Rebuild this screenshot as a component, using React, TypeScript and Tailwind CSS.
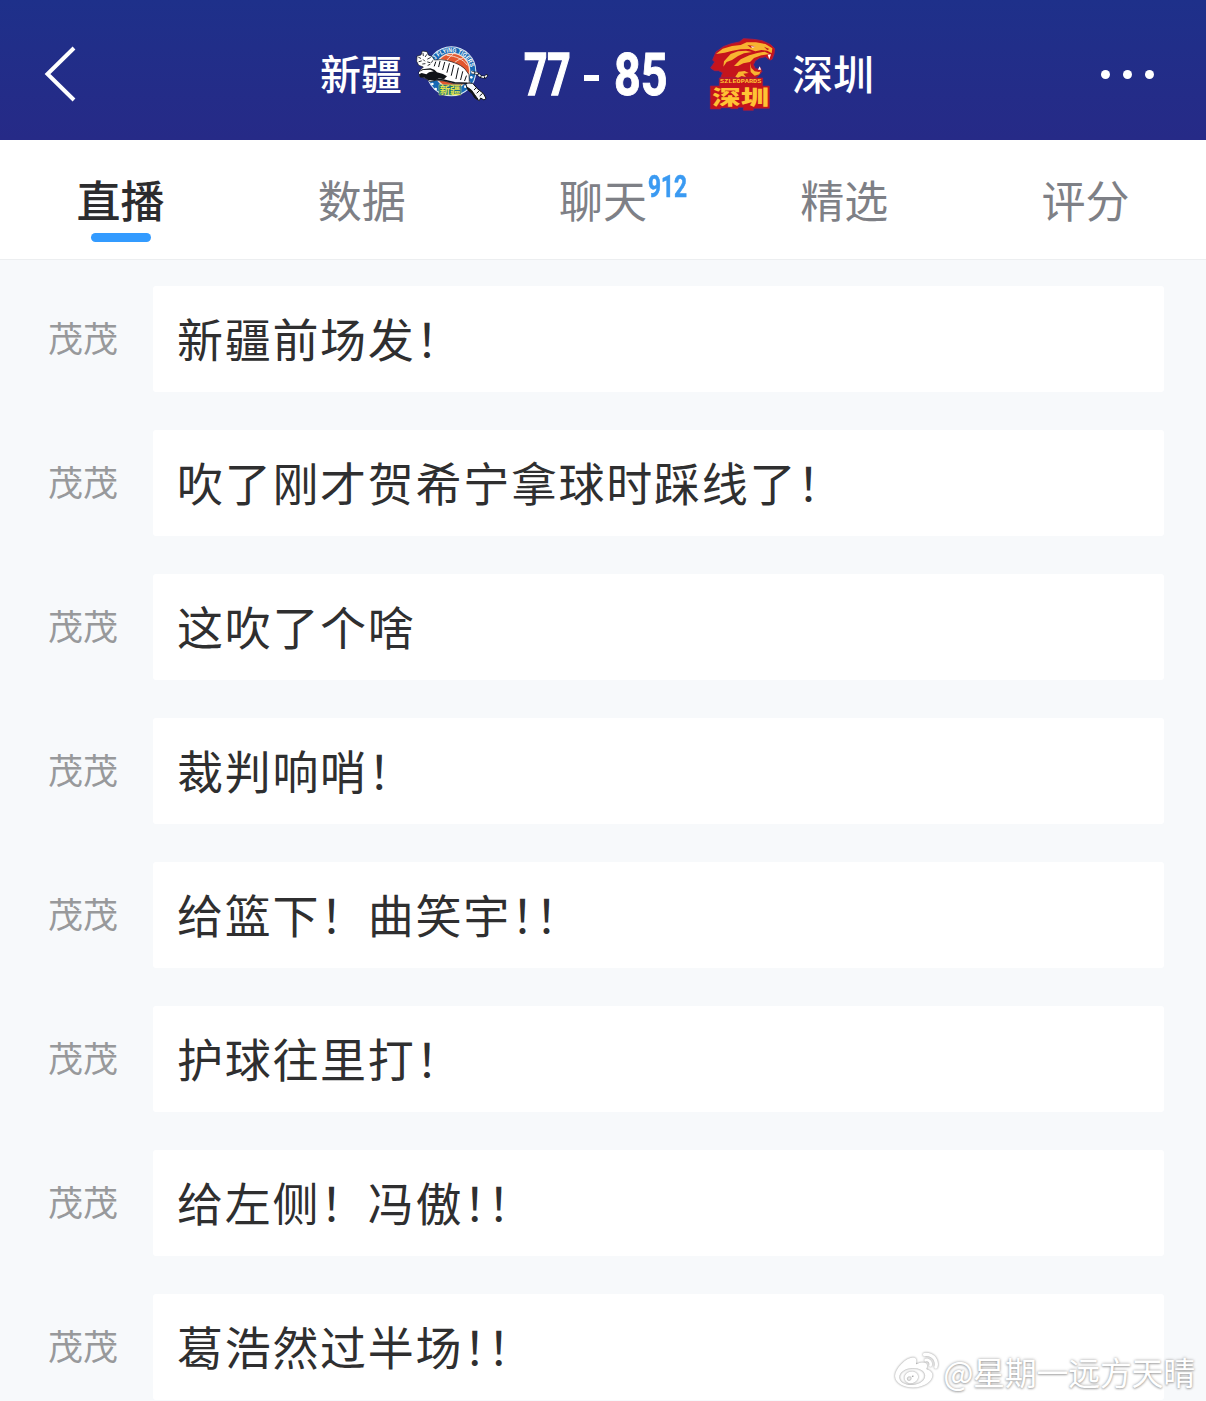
import { FaWeibo } from 'react-icons/fa';

interface Comment {
  id: number;
  author: string;
  text: string;
}

const tabs = [
  { label: '直播', active: true },
  { label: '数据' },
  { label: '聊天', count: '912' },
  { label: '精选' },
  { label: '评分' },
];

const comments: Comment[] = [
  { id: 1, author: '茂茂', text: '新疆前场发！' },
  { id: 2, author: '茂茂', text: '吹了刚才贺希宁拿球时踩线了！' },
  { id: 3, author: '茂茂', text: '这吹了个啥' },
  { id: 4, author: '茂茂', text: '裁判响哨！' },
  { id: 5, author: '茂茂', text: '给篮下！曲笑宇！！' },
  { id: 6, author: '茂茂', text: '护球往里打！' },
  { id: 7, author: '茂茂', text: '给左侧！冯傲！！' },
  { id: 8, author: '茂茂', text: '葛浩然过半场！！' },
];

const TigersLogo = () => (
  <svg className="h-[60px] w-[76px] overflow-visible" viewBox="45 42 228 180">
    <defs>
      <path id="tigersArc" d="M96 108 A60 60 0 0 1 212 116" />
    </defs>
    <circle cx="154" cy="124" r="75" fill="#dcecf8" />
    <circle cx="154" cy="124" r="72" fill="#1769b5" />
    <circle cx="157" cy="122" r="52" fill="#e3572f" stroke="#f4ddd0" strokeWidth="4" />
    <g fill="none" stroke="#f6d9c9" strokeWidth="3">
      <path d="M118 88c30 2 64 22 84 50M160 72c-12 8-20 18-24 32M190 84c-16 4-30 14-36 28M140 76c28 2 50 12 62 30" />
    </g>
    <text fill="#fff" fontSize="19" fontWeight="700" fontFamily="Liberation Sans, sans-serif">
      <textPath href="#tigersArc" startOffset="10" textLength="144" lengthAdjust="spacingAndGlyphs">XJ FLYING TIGERS</textPath>
    </text>
    <g fill="#fff">
      <circle cx="97" cy="162" r="4" />
      <circle cx="107" cy="177" r="4" />
      <circle cx="217" cy="126" r="4" />
      <circle cx="214" cy="142" r="4" />
      <circle cx="207" cy="157" r="4" />
      <circle cx="196" cy="170" r="4" />
    </g>
    {/* hind legs */}
    <path d="M196 158L218 160 232 176 250 190 258 205 252 210 242 204 238 212 226 205 220 190 202 176z" fill="#f6f7fa" stroke="#101318" strokeWidth="3" />
    <path d="M202 172L214 180 224 194 234 208 224 203 216 190 204 180zM230 172l-8 8M238 182l-8 8M248 190l-9 8" fill="#101318" stroke="#101318" strokeWidth="3" />
    {/* body */}
    <path d="M50 94L51 78 63 75 67 63 81 65 85 75 97 80 103 90 123 89C153 92 181 103 195 117L207 134 208 158 192 162 162 161 132 153 108 151 90 155 78 146 58 139 60 121 70 111 56 106z" fill="#fff" stroke="#101318" strokeWidth="2" />
    {/* tail */}
    <path d="M215 128l16 2 12 10 12 2 7-8" fill="none" stroke="#101318" strokeWidth="8" />
    <path d="M215 128l16 2 12 10 12 2 7-8" fill="none" stroke="#f6f7fa" strokeWidth="5" strokeDasharray="8 3" />
    {/* face and stripes */}
    <g fill="none" stroke="#101318" strokeWidth="2.6" strokeLinecap="round">
      <path d="M56 82l6 3M69 70l1 7M80 74l-4 6M91 83l-8 4M57 95l7-2M70 89l4 4M83 96l7 2M68 102l7-1M84 106l6-3M98 92l-3 5" />
      <path d="M120 94l-4 16M134 97l-6 22M148 101l-7 26M161 106l-7 30M175 114l-7 32M188 125l-6 24M199 138l-5 14M107 96l-4 12" strokeWidth="3" />
    </g>
    <path d="M55 126L67 118 91 115 103 119 111 127 129 132 141 139 132 148 116 145 104 152 84 150 74 143 60 142z" fill="#101318" />
    <path d="M57 126l12-6 22-1 10 5-14 3-8 6-14-4-8 4z" fill="#fff" />
    <path d="M104 146l26 4 34 8 38 2" fill="none" stroke="#101318" strokeWidth="4.5" />
    <path d="M117 164h66v31h-66z" fill="#176f86" stroke="#d9e36a" strokeWidth="1.5" />
    <text x="119" y="191" fill="#e3e24c" fontSize="31" fontWeight="700" fontFamily="Noto Sans CJK SC, sans-serif">新疆</text>
  </svg>
);

const LeopardsLogo = () => (
  <svg className="h-[74px] w-[66px] overflow-visible" viewBox="48 38 198 222">
    {/* head with open jaw */}
    <path d="M50 128L62 110 56 104 66 80 88 64 112 55 136 50 148 40 178 42 204 46 230 58 242 70 240 86 234 102 228 104 214 94 196 98 184 106 178 118 184 130 195 132 198 126 204 138 196 148 184 158H80L86 142 74 136 62 136z" fill="#c5141c" stroke="#a11c48" strokeWidth="3" strokeLinejoin="round" />
    {/* nameplate */}
    <path d="M76 158H206V182H226V249H178V255H148V246H132V250H110V247H80V251H49V182H76z" fill="#c5141c" stroke="#a11c48" strokeWidth="2" />
    <g fill="#f8b431">
      <path d="M66 86L86 70 114 62 140 59 158 51 186 51 214 56 235 69 233 84 220 76 202 74 184 78 165 71 140 72 112 77 92 82z" />
      <path d="M90 108L110 86 132 78 156 76 174 80 150 84 132 92 114 104 98 110 88 124z" />
      <path d="M120 122L140 102 166 90 190 83 212 79 226 86 202 90 180 98 168 110 148 114 132 122z" />
      <path d="M168 113L172 128 182 138 196 140 201 134 196 147 182 151 170 140z" />
      <path d="M124 154L134 139 152 137 164 143 148 145 156 155 143 152 132 157z" />
    </g>
    <path d="M160 59l24 4-14 4zM210 64l16 7-6 3z" fill="#bd141b" />
    <path d="M170 63l14 1-9 3zM221 88l5 14 5-15zM192 133l5-10 4 10z" fill="#fff" />
    <text x="78" y="174" fill="#ffc334" fontSize="18" fontWeight="700" fontFamily="Liberation Mono, monospace" textLength="124" lengthAdjust="spacingAndGlyphs">SZLEOPARDS</text>
    <text x="55" y="240" fill="#ffc334" fontSize="62" fontWeight="900" fontFamily="Noto Sans CJK SC, sans-serif" textLength="170" lengthAdjust="spacingAndGlyphs">深圳</text>
  </svg>
);

const ScoreHeader = () => (
  <header className="flex h-[140px] items-center bg-linear-to-b from-[#1e308a] to-[#262a87] pb-[8px] text-white">
    <button className="ml-[44px] mt-[16px] w-[276px]" aria-label="返回">
      <svg className="h-[56px] w-[34px]" viewBox="0 0 34 56" fill="none" stroke="currentColor" strokeWidth="4">
        <path d="M30 2L3.5 28 30 54" />
      </svg>
    </button>
    <span className="mt-[13px] w-[94px] text-[41px] font-medium leading-none">新疆</span>
    <div className="mt-[16px] w-[76px] pl-px"><TigersLogo /></div>
    <div className="mt-[12px] flex h-[60px] w-[218px] items-center pl-[34px] text-[59px] font-bold leading-none">
      <div className="w-[60px]"><span className="inline-block origin-left scale-x-[0.69] font-[Roboto] [-webkit-text-stroke:1.5px_white]">77</span></div>
      <span className="mt-[12px] h-[6px] w-[15px] bg-white" />
      <div className="ml-[15px] w-[60px]"><span className="inline-block origin-left scale-x-[0.79] font-[Roboto] [-webkit-text-stroke:1px_white]">85</span></div>
    </div>
    <div className="mt-[18px] w-[84px] pl-[2px]"><LeopardsLogo /></div>
    <span className="mt-[13px] w-[309px] text-[41px] font-medium leading-none">深圳</span>
    <button className="mt-[16px] flex gap-[13px]" aria-label="更多">
      <span className="size-[9px] rounded-full bg-white" />
      <span className="size-[9px] rounded-full bg-white" />
      <span className="size-[9px] rounded-full bg-white" />
    </button>
  </header>
);

const TabBar = () => (
  <nav className="grid h-[120px] grid-cols-5 border-b border-[#eceef0] bg-white">
    {tabs.map(tab => (
      <div key={tab.label} className="flex flex-col items-center pt-[27px]">
        <span className={tab.active ? 'relative text-[44px] font-medium leading-[64px] text-[#2c2c2e]' : 'relative text-[44px] leading-[64px] text-[#7e8086]'}>
          {tab.label}
          {tab.count && (
            <span className="absolute left-[89px] top-[3px] origin-left scale-x-[0.71] font-[Roboto] text-[32px] font-bold leading-[32px] text-[#3a9af2] [-webkit-text-stroke:0.6px_#3a9af2]">{tab.count}</span>
          )}
        </span>
        {tab.active && <span className="mt-[2px] h-[9px] w-[60px] rounded-full bg-[#339bff]" />}
      </div>
    ))}
  </nav>
);

// doubled exclamation marks are set half an em apart
const CommentText = ({ text }: { text: string }) => {
  if (!text.endsWith('！！')) return <span>{text}</span>;
  return <span>{text.slice(0, -2)}<span className="tracking-[-22px]">！</span>！</span>;
};

export default function App() {
  return (
    <div className="relative h-[1401px] w-[1206px] overflow-hidden bg-[#f7f9fb] font-['Noto_Sans_CJK_SC',sans-serif]">
      <ScoreHeader />
      <TabBar />
      <main className="flex flex-col gap-[38px] pt-[26px]">
        {comments.map(comment => (
          <div key={comment.id} className="flex h-[106px] shrink-0 items-center">
            <span className="w-[153px] pb-[6px] pl-[48px] text-[35px] leading-none text-[#98999b]">{comment.author}</span>
            <p className="flex h-full w-[1011px] items-center rounded-[3px] bg-white pb-[5px] pl-[24px] text-[46px] leading-none tracking-[1.7px] text-[#2f2f30]">
              <CommentText text={comment.text} />
            </p>
          </div>
        ))}
      </main>
      <div className="absolute bottom-[7px] right-[11px] flex items-center gap-[5px] text-white">
        <FaWeibo className="size-[43px] drop-shadow-[0_0_1px_#888]" />
        <span className="text-[32px] leading-[46px] tracking-[-0.3px] [text-shadow:0_0_3px_#999,0_1px_2px_#bbb]">@星期一远方天晴</span>
      </div>
    </div>
  );
}
